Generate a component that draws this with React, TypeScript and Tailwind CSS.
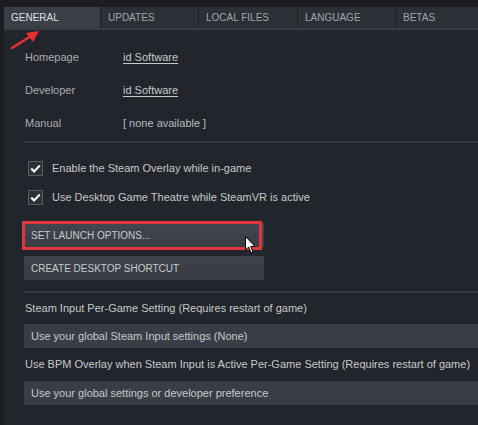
const TABS = [
  { label: "GENERAL", w: "w-[96px]", active: true },
  { label: "UPDATES", w: "w-[97px]", active: false },
  { label: "LOCAL FILES", w: "w-[98px]", active: false },
  { label: "LANGUAGE", w: "w-[97px]", active: false },
  { label: "BETAS", w: "flex-1", active: false },
];

const INFO = [
  { label: "Homepage", value: "id Software", link: true },
  { label: "Developer", value: "id Software", link: true },
  { label: "Manual", value: "[ none available ]", link: false },
];

function Check() {
  return (
    <span className="flex h-[15px] w-[15px] shrink-0 items-center justify-center border border-[#5a5f66] bg-[#2c3036]">
      <svg width="11" height="9" viewBox="0 0 11 9">
        <path d="M1.2 4.6 L4.1 7.4 L9.8 1.4" fill="none" stroke="#f2f2f2" strokeWidth="2.2" />
      </svg>
    </span>
  );
}

export default function App() {
  return (
    <div
      className="relative flex h-[425px] w-[478px] flex-col overflow-hidden bg-[#1b1d21] pl-[4px] pt-[7px] text-[11px] text-[#b9bdc1]"
      style={{ fontFamily: '"Liberation Sans", Arial, sans-serif' }}
    >
      {/* Tabs */}
      <div className="flex h-[21px] gap-px bg-[#1e2025]">
        {TABS.map(t => (
          <div
            key={t.label}
            className={`${t.w} flex items-center pl-[7px] text-[10px] ${
              t.active ? "bg-[#3b4048] text-[#dfe2e5]" : "bg-[#2b2f36] text-[#a2a7ad]"
            }`}
          >
            {t.label}
          </div>
        ))}
      </div>

      <div className="flex flex-1 flex-col border-t-2 border-[#383c43] bg-[#22252b] pl-[20px] pt-[11px]">
        {/* Info rows */}
        {INFO.map(r => (
          <div key={r.label} className="flex h-[33px] items-center">
            <span className="w-[99px] pl-px text-[#a9aeb3]">{r.label}</span>
            <span className={r.link ? "text-[#c4c9ce] underline underline-offset-2" : "text-[#b9bdc1]"}>
              {r.value}
            </span>
          </div>
        ))}

        <div className="mt-[1px] h-[2px] bg-[#33373e]" />

        {/* Checkboxes */}
        <div className="mt-[11px] flex flex-col">
          {["Enable the Steam Overlay while in-game", "Use Desktop Game Theatre while SteamVR is active"].map(l => (
            <div key={l} className="flex h-[29px] items-center gap-[9px] pl-[4px]">
              <Check />
              <span className="text-[#c6c9cd]">{l}</span>
            </div>
          ))}
        </div>

        {/* Buttons */}
        <div className="mt-[11px] flex flex-col gap-[8px]">
          <div className="relative flex h-[25px] w-[240px] items-center bg-gradient-to-b from-[#41464f] to-[#393d45] pl-[7px] text-[10px] text-[#c8ccd0]">
            SET LAUNCH OPTIONS...
            <div className="absolute -left-[2px] -top-[2px] h-[29px] w-[240px] border-[3px] border-[#e0363c]" />
            <svg className="absolute left-[221px] top-[13px]" width="12" height="18" viewBox="0 0 12 18">
              <path d="M0.5 0.5 L0.5 14 L3.6 11 L6 16.8 L8 16 L5.7 10.4 L10 10.4 Z" fill="#ffffff" stroke="#000000" strokeWidth="1" />
            </svg>
          </div>
          <div className="flex h-[24px] w-[240px] items-center bg-gradient-to-b from-[#3e434b] to-[#363a41] pl-[7px] text-[10px] text-[#c8ccd0]">
            CREATE DESKTOP SHORTCUT
          </div>
        </div>

        <div className="mt-[11px] h-[2px] bg-[#33373e]" />

        {/* Steam input */}
        <div className="flex h-[31px] items-center pl-px text-[#c6c9cd]">
          Steam Input Per-Game Setting (Requires restart of game)
        </div>
        <div className="flex h-[24px] items-center bg-[#393d45] pl-[7px] text-[#c6c9cd]">
          Use your global Steam Input settings (None)
        </div>
        <div className="flex h-[33px] items-center pl-px text-[#c6c9cd]">
          Use BPM Overlay when Steam Input is Active Per-Game Setting (Requires restart of game)
        </div>
        <div className="flex h-[24px] items-center bg-[#393d45] pl-[7px] text-[#c6c9cd]">
          Use your global settings or developer preference
        </div>
      </div>

      {/* Red arrow pointing at the GENERAL tab */}
      <svg className="absolute left-[10px] top-[29px]" width="32" height="21" viewBox="0 0 32 21">
        <path d="M2 19 L21 7" stroke="#e8302f" strokeWidth="2.6" strokeLinecap="round" />
        <path d="M29 2 L16 4 L23 13 Z" fill="#e8302f" />
      </svg>
    </div>
  );
}
